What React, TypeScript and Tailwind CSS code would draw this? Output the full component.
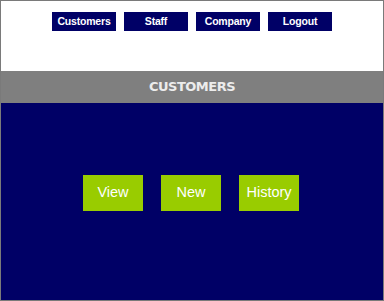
import React from "react";

export default function App() {
  const nav = ["Customers", "Staff", "Company", "Logout"];
  const actions = ["View", "New", "History"];
  return (
    <div className="w-[384px] h-[301px] border border-[#7a7a7a] flex flex-col bg-white">
      <div className="h-[70px] bg-white flex justify-center gap-2 pt-[11px]">
        {nav.map((n) => (
          <div
            key={n}
            className="w-16 h-[19px] bg-[#000066] text-white flex items-center justify-center text-[10.5px] font-bold tracking-[-0.2px]"
            style={{ fontFamily: '"Liberation Sans", Arial, sans-serif' }}
          >
            {n}
          </div>
        ))}
      </div>
      <div
        className="h-8 bg-[#7f7f7f] flex items-center justify-center text-[#ececec] text-[13px] font-bold tracking-[-0.5px]"
        style={{ fontFamily: '"DejaVu Sans", Verdana, sans-serif' }}
      >
        CUSTOMERS
      </div>
      <div className="flex-1 bg-[#000066] flex justify-center gap-[18px] pt-[72px] pr-[2px]">
        {actions.map((a) => (
          <div
            key={a}
            className="w-[60px] h-9 bg-[#99cc00] text-white flex items-center justify-center text-[14.5px]"
            style={{ fontFamily: '"Liberation Sans", Arial, sans-serif' }}
          >
            {a}
          </div>
        ))}
      </div>
    </div>
  );
}
